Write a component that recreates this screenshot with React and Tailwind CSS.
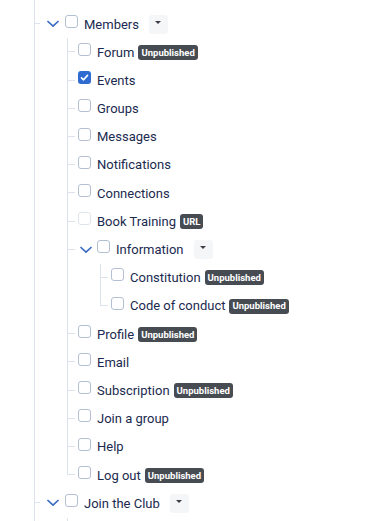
import React from 'react';

const tree = [
  { hidden: true, children: [{ label: 'Search' }] },
  {
    label: 'Members',
    open: true,
    menu: true,
    children: [
      { label: 'Forum', badge: 'Unpublished' },
      { label: 'Events', checked: true },
      { label: 'Groups' },
      { label: 'Messages' },
      { label: 'Notifications' },
      { label: 'Connections' },
      { label: 'Book Training', badge: 'URL', disabled: true },
      {
        label: 'Information',
        open: true,
        menu: true,
        children: [
          { label: 'Constitution', badge: 'Unpublished' },
          { label: 'Code of conduct', badge: 'Unpublished' },
        ],
      },
      { label: 'Profile', badge: 'Unpublished' },
      { label: 'Email' },
      { label: 'Subscription', badge: 'Unpublished' },
      { label: 'Join a group' },
      { label: 'Help' },
      { label: 'Log out', badge: 'Unpublished' },
    ],
  },
  { label: 'Join the Club', open: true, menu: true, children: [{ label: 'Welcome' }] },
];

function Chevron() {
  return (
    <svg width="12" height="8" viewBox="0 0 12 8" fill="none">
      <polyline points="1,1.5 6,6.2 11,1.5" stroke="#3b6cc2" strokeWidth="1.7" strokeLinecap="round" strokeLinejoin="round" />
    </svg>
  );
}

function Checkbox({ checked, disabled }) {
  if (checked) {
    return (
      <span className="mb-[6px] flex h-[13px] w-[13px] shrink-0 items-center justify-center rounded-[3px] bg-[#2f6bd1]">
        <svg width="9" height="9" viewBox="0 0 9 9" fill="none">
          <polyline points="1.5,4.8 3.6,6.8 7.5,2.4" stroke="#fff" strokeWidth="1.6" strokeLinecap="round" strokeLinejoin="round" />
        </svg>
      </span>
    );
  }
  return (
    <span
      className={
        disabled
          ? 'mb-[6px] h-[13px] w-[13px] shrink-0 rounded-[3px] border border-[#dfe4ec] bg-white'
          : 'mb-[6px] h-[13px] w-[13px] shrink-0 rounded-[3px] border border-[#b3bfd3] bg-white'
      }
    />
  );
}

function Badge({ text }) {
  return (
    <span className="ml-[4px] flex h-[15px] items-center rounded-[3px] bg-[#474c53] px-[3px] text-[9.5px] font-bold leading-none text-white">
      {text}
    </span>
  );
}

function Row({ item, top }) {
  return (
    <div className="flex h-[28.2px] items-center whitespace-nowrap">
      {item.children ? (
        <span className={top ? 'flex w-[25px] shrink-0 justify-center' : 'flex w-[22px] shrink-0 justify-center'}>
          <Chevron />
        </span>
      ) : (
        <span className="w-[3px] shrink-0" />
      )}
      <Checkbox checked={item.checked} disabled={item.disabled} />
      <span className="ml-[6px] text-[13px] text-[#1b2a50]">{item.label}</span>
      {item.badge && <Badge text={item.badge} />}
      {item.menu && (
        <span className="ml-[10px] flex h-[19px] w-[19px] justify-center rounded-[3px] bg-[#f5f6f8] pt-[6px]">
          <span className="h-0 w-0 border-x-[3px] border-t-[3px] border-x-transparent border-t-[#3a3f47]" />
        </span>
      )}
    </div>
  );
}

function Node({ item, last, top }) {
  const tick = top ? 'w-[6px]' : 'w-[8px]';
  return (
    <li className="flex">
      {last ? (
        <div className={`${tick} h-[14px] shrink-0 border-b border-l border-[#dde3ec]`} />
      ) : (
        <div className={`${tick} shrink-0 border-l border-[#dde3ec]`}>
          <div className="h-[14px] border-b border-[#dde3ec]" />
        </div>
      )}
      <div className="min-w-0 flex-1">
        {!item.hidden && <Row item={item} top={top} />}
        {item.children && item.open !== false && (
          <ul className={top ? 'ml-[27px]' : 'ml-[25px]'}>
            {item.children.map((c, i) => (
              <Node key={c.label} item={c} last={i === item.children.length - 1} />
            ))}
          </ul>
        )}
      </div>
    </li>
  );
}

export default function App() {
  return (
    <div className="h-[521px] w-[368px] overflow-hidden bg-white" style={{ fontFamily: 'Roboto, "Noto Sans", sans-serif' }}>
      <ul className="-mt-[18px] ml-[34px]">
        {tree.map((item, i) => (
          <Node key={i} item={item} top last={false} />
        ))}
      </ul>
    </div>
  );
}
